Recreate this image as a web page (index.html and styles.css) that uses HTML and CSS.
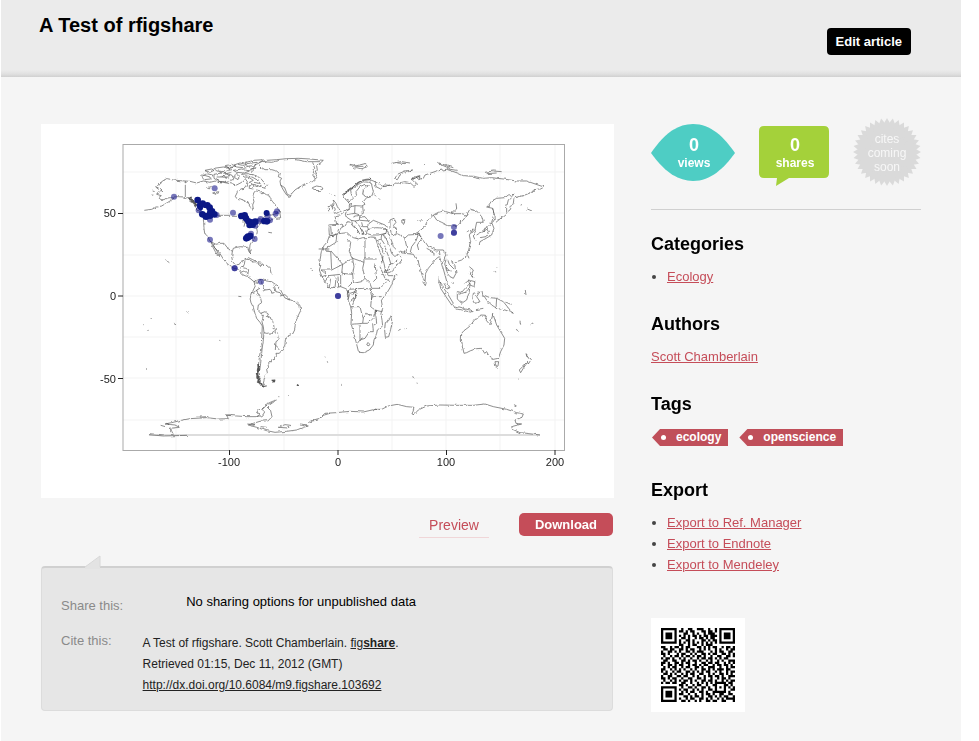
FILE: index.html
```html
<!DOCTYPE html>
<html lang="en">
<head>
<meta charset="utf-8">
<title>A Test of rfigshare</title>
<link rel="stylesheet" href="styles.css">
</head>
<body>
<div class="page">
  <header class="header">
    <h1>A Test of rfigshare</h1>
    <button class="edit" type="button">Edit article</button>
  </header>
  <main class="main">
    <div class="content">
      <figure class="figure">
        <svg viewBox="41 124 573 374" role="img" aria-label="World map of occurrences">
          <defs>
            <filter id="rough" x="-5%" y="-5%" width="110%" height="110%">
              <feTurbulence type="fractalNoise" baseFrequency="0.22" numOctaves="2" seed="4"/>
              <feDisplacementMap in="SourceGraphic" scale="3" xChannelSelector="R" yChannelSelector="G"/>
            </filter>
          </defs>
          <path class="grid" d="M176 145V450M229 145V450M284 145V450M338 145V450M392 145V450M446 145V450M500 145V450M555 145V450M123 172H564M123 213H564M123 255H564M123 296H564M123 337H564M123 378H564M123 420H564"/>
          <path class="pole" d="M149 435H540"/>
          <g filter="url(#rough)">
            <g class="coast" transform="translate(90 135) scale(.3333)">
              <path d="M163 226L185 223 198 217 215 213 232 203 245 195 252 189M252 186L262 185 280 186 290 189 300 196 310 205 318 215 325 225 333 236 340 249 341 262 342 280 344 295 352 303 360 318M252 189L240 188 228 190 222 194 213 194 206 188 214 182 200 178 204 171 218 170 210 162 200 156 206 148 214 141 224 134 232 131 250 135 270 137 286 138 300 139 320 144 340 138 360 142 380 137 400 142 420 146 440 150 455 142 465 130 472 140 468 152 462 160 452 162 442 172 436 184 440 190 452 192 465 198 476 205 482 215 486 226 490 222 488 210 492 200 488 185 492 172 500 165 512 168 520 175 530 182 535 178 540 190 548 200 558 212 568 225 560 236 545 240 530 240 520 248M568 225L572 248 560 250 552 244"/>
              <path d="M286 138V186M385 241H450"/>
              <path d="M360 318L368 327 372 336 382 346 390 356 400 372 408 382 418 392 432 400 445 403 452 412 460 420 470 424 480 430 492 440 505 442 512 432M362 320L368 335 376 350 384 362 388 366 382 350 374 338 370 328M362 320L378 328 390 325 402 325 412 338 420 342 427 350 425 365 428 380 436 390 448 388 454 378 465 376 463 388 458 398 467 400 476 404 474 415 480 425M427 350L430 340 440 337 452 335 462 336 472 333 476 345 482 355 479 342 480 330 484 322 495 312 500 300 502 290 500 280 506 272 512 265 520 262 535 258 550 252"/>
              <path d="M464 372L475 368 488 374 500 380 490 381 478 374ZM503 383L515 385 522 391 508 391ZM528 390L540 400 544 418M445 403L456 396 458 398M452 412L462 408 474 415M458 262L466 258 462 275M470 250L480 256 478 270"/>
              <path d="M508 82L530 76 560 74 590 71 625 70 660 72 700 76 690 85 680 92 682 105 675 118 680 128 668 140 650 148 630 155 615 165 606 175 600 187 590 180 580 165 572 150 570 138 575 130 565 125 568 115 560 108 545 104 525 104 512 96ZM520 80L545 82 570 76M620 74L650 80 690 80M668 82L674 100 668 120 676 132M572 150L584 158 592 178 602 182M667 158L680 153 695 156 699 162 688 167 674 166Z"/>
              <path d="M335 125L350 116 368 120 362 132 342 134ZM372 118L395 114 425 120 432 132 410 142 385 138 372 130ZM345 106L365 102 372 106 360 112ZM372 100L400 96 420 102 404 110 380 108ZM405 92L425 88 438 94 420 100ZM430 106L455 102 478 108 464 114 440 112ZM432 90L450 84 468 88 460 98 440 96ZM465 82L490 76 520 74 508 84 490 92 472 94ZM436 118L448 122 444 134 434 128ZM455 118L475 116 498 122 512 130 522 142 532 150 526 160 512 156 500 150 488 148 478 142 490 136 478 128 462 126ZM480 104L498 98 486 110ZM460 100L480 96M478 152L492 152 490 162 478 160ZM350 158L364 154 358 162ZM368 174L386 170 378 178ZM388 110L402 118 424 112M395 124L410 128 405 136M498 86L490 100 478 104M340 120L360 126M410 98L430 96M444 88L462 92M470 86L500 82M466 122L486 126 504 136M492 142L512 146M380 126L420 126M415 106L426 104"/>
              <path class="heavy" d="M292 188L304 194 312 202 320 212"/>
              <path d="M300 188L312 198 306 200 318 210 312 212 322 220M302 192L316 204M304 190L320 208 316 212 324 226M222 373L230 377 238 383M188 168L194 170M183 181L190 180M535 292L548 294M686 342H718M662 400L668 408M445 484L454 485"/>
            </g>
            <g class="coast" transform="translate(90 290) scale(.3333)">
              <path d="M492-25L496-12 490 0 484 12 480 25 483 38 490 52 495 70 500 85 510 97 517 108 516 130 514 160 510 190 506 220 502 240 500 255 502 272 510 284 522 291 530 288 520 280 524 265 526 255 532 248 530 238 536 232 534 224 540 216 552 208 560 198 558 190 568 190 578 178 585 165 586 150 594 138 608 132 614 120 616 100 622 82 632 62 630 46 618 36 602 30 585 24 578 12 572 0 565-12 555-18 545-25 530-27 518-30 508-32 498-28Z"/>
              <path d="M484 12L495 8 500 0 510-5M503 60L505 45 515 38 512 25 505 12 500 0M503 60L512 70 525 65 535 72 532 80 548 90 552 110 556 115 548 128 530 130 522 128 520 110 516 95 520 75 512 70M522 128L520 150 516 180 512 220 508 250 510 275 520 285M548 115L556 118 555 128 566 134 568 148 558 155 556 180M556 165L570 178M512-28L520-15 525 0 516 5M525 0L540-2 548 10 555 5 550-8M552-16L558 5 570 8 575 16M570 18L585 14 600 28"/>
              <path class="heavy" d="M504 222L508 240 500 250 506 262 502 272 512 278 516 288 524 290M504 235L502 265 510 280M545 272L556 271M621 284L626 288"/>
              <path d="M177 434L220 438 294 436M250 434L246 425 240 415 268 412 255 405 225 402 245 398 270 392 300 386 350 383 385 387 415 386 410 376 440 378 470 380 500 380 512 372 500 368 505 360 520 355 525 345 545 335 560 330M500 380L518 376 524 366 516 358 528 348 540 344 554 334M525 345L542 362 546 380 535 392 510 394 490 400 475 405 500 412 530 422 555 427 590 424 620 420 640 412 655 408 630 405M330 381L355 380M408 375L430 374M472 402L495 404 485 408M565 412L585 404 602 406 595 414ZM512 410L530 412M212 406L226 410M229 400L240 404M655 398L670 390 690 385 700 376 720 370"/>
              <path d="M182 84L185 87M168 234L170 236M250 100L258 104M289 62L293 66M388 151L391 152M162 104L164 104M174 121L176 121M232 8L234 9M565 320L568 320M595 316L597 318"/>
            </g>
            <g class="coast" transform="translate(310 135) scale(.3333)">
              <path d="M58 303L70 300 80 298 95 295 112 293 118 300 130 308 145 312 158 308 170 308 185 306 196 307 200 320 208 345 215 365 222 385 226 405 235 422 255 422 248 440 242 455 230 475 215 495M58 303L52 320 42 332 34 350 30 372 32 392 28 405 36 425 45 440 58 458 75 458 92 455 105 460 114 465 118 480 114 495"/>
              <path d="M42 345L62 347 65 405H33M62 347L98 388 65 405M98 388L128 370 118 350 122 322 112 310M128 370L162 382V372M165 312V372H200M162 382L158 400 165 430 155 440M98 388L95 415 128 418 130 440 115 455M128 370L132 395 128 418M155 440L130 445M165 430L180 445 185 460H210L230 440M195 385L200 430 190 440M210 395L225 430 240 440M33 405L55 422 92 418M45 440L55 425 62 430 58 458M36 425L50 420M75 458L78 430 70 422M86 456L84 425M92 455V418M118 463L160 460 180 462M128 480L140 460M46 342L78 322 80 300"/>
              <path d="M58 300L56 270 80 268 95 268 104 272 92 280 85 295 70 302ZM62 274L64 298M80 268L75 242 90 240 100 232 108 226 118 222 118 208 125 205 122 215 135 212 155 213 165 208 160 200 170 188 185 186M104 272L110 262 118 260 130 275 145 288 142 294M150 298L140 282 128 268 124 256 135 258 150 275 158 295 168 300 172 285 185 280 200 278 220 280 230 285 228 295 205 300 185 300 172 296M150 275L160 290 154 300M178 265L190 256 205 262 225 270 232 278M178 265L172 275 176 284M112 222L106 238 112 248 124 256M135 212L134 235 118 238 110 240M134 235L150 240 160 235 158 213M150 240L148 256 135 258M148 246L165 245 178 262M150 256L176 258M130 246L142 242M155 262L158 275 172 275"/>
              <path d="M228 295L215 300 213 312 222 325 228 345 236 365 242 385 228 410M222 412L240 412 262 392 278 372 270 362 262 358 255 365 245 355 238 335 232 318 222 300M205 320L222 355 215 385M230 285L245 318 250 335 265 350 285 355 310 358 318 372 325 380 330 400 338 425 345 442 347 415 355 400 370 382 380 370 388 365 392 375M218 284L228 280M200 318L212 312M238 390L262 375M222 412L226 405 240 400M338 440L346 452 349 442"/>
              <path d="M100 182L105 172 125 160 140 145 155 135 175 132 195 140 215 152 225 155 240 150M108 195L100 182M108 195L120 200 130 190 140 180 138 170 150 155 165 148 175 152 160 165 158 178 170 185 185 184 190 170 185 150 178 138M125 185L122 165 145 148 160 140 176 142M195 140L198 155 212 162 226 150 250 152 252 144 262 145 285 140 300 143 312 154 320 148 308 136 312 126 330 122 326 134 340 130 345 120 360 115 380 108 410 103 425 108 445 115 460 122 490 124 520 130 545 128 580 132 620 138 650 138 690 152 702 156 692 162 672 164 665 172 645 180 625 186 612 190 610 205 600 225 590 232 590 215 595 195 605 185 612 178 595 180 585 188 560 190 545 198 535 212 530 216 548 220 552 240 545 262 530 275 520 290 508 295 500 300"/>
              <path class="medium" d="M102 180L106 172 118 165 130 155 142 145 158 136 180 134M112 200L118 208M304 134L318 128 328 124"/>
              <path d="M308 105L285 108 262 118 254 132 262 134 270 120 290 112ZM120 88L140 92 165 86 172 94 155 102 140 98 130 100ZM126 94L160 94M245 85L275 80 300 84M262 84L288 86M382 82L410 92 430 98M390 88L420 100M525 112L550 108 575 110M530 116L560 114M415 102L440 106M70 195L78 205 82 215 92 228 80 235 72 232 76 222 68 212ZM54 212L66 210 68 222 56 228ZM72 180L76 182M62 176L64 178M192 178L198 184M206 190L210 194"/>
              <path d="M470 290L482 285 490 282 478 300 482 320 476 345 470 362 455 375 440 380 425 380 435 395 438 415 430 430 420 425 412 415 408 400 410 390M412 372L418 388 432 402M408 374L404 388 412 405 425 408M548 220L556 250 548 262M545 262L552 280 545 300 525 312 510 320 508 330M530 275L538 290 528 305 510 308M520 290L532 282M497 288L490 300 498 318M558 262L590 235M370 240L385 232 400 228 430 236 455 236 470 240 460 255 440 272 415 272 395 262 380 255ZM425 236L440 222 438 208M470 240L480 222 500 228 515 245 520 262 500 262 495 285 484 294M370 240L350 262 345 275 325 290 332 305 345 320 355 335 380 345 400 345 408 360 400 380M283 355L290 335 284 310 295 300 325 298 318 318 305 335 300 355M262 296L284 308M322 296L336 308 322 330 326 345M350 340L372 352 372 362M376 348L390 362 388 345M318 292L325 300M322 256L338 254M240 255L252 250 258 262 250 272 260 285 258 300 245 298 240 280ZM275 256L285 253 283 265 276 264Z"/>
              <path d="M392 375L398 395 405 420 412 445 420 458 412 462 402 445M388 440L400 458 415 480 430 505 425 510 408 485 392 460ZM430 512L460 520 490 528 485 532 440 522ZM442 470L455 472 470 455 480 445 478 470 470 495 455 505 442 492ZM446 478L466 472 476 462M490 475L510 470 500 485 510 500 496 505 488 490ZM478 395L490 405 484 420 492 430M482 404L478 418 490 428M475 435L495 440 492 455 480 450ZM520 480L540 488 560 490 580 500 600 525 610 535 585 525 560 520 545 510 530 495ZM560 490L558 520M516 468L520 486M498 524L520 520M585 500L602 508M474 362L477 370M425 440L428 446M388 425L386 445M462 448L474 438"/>
              <path d="M652 222L666 228M632 208L636 210M345 88L342 90M560 398L561 400M646 465L648 480M555 408L557 412M257 418L262 420"/>
            </g>
            <g class="coast" transform="translate(310 290) scale(.3333)">
              <path d="M114 30L122 50 125 70 123 100 130 125 138 155 146 187 160 188 178 180 190 165 192 150 200 130 202 120 218 108 216 90 213 70 218 55 214 30M226 98L236 92 244 76 248 92 242 118 236 140 226 142 224 120ZM116 0L114 30M122 50L150 50 155 70 160 85 158 100 123 103M150 105V150L142 160M150 150L165 145 178 125 190 125M158 100L172 100 190 85 198 60M160 85L170 70 185 80M180-5L185 20 182 50 195 60 215 65M185 20L215 20M190 125L188 100M170 162L175 158 180 164 174 168ZM120 10L135 5 138 20 122 34M140-5L136 20 128 45M178 0L190 10 184 30M196 60L200 100 192 105"/>
              <path d="M455 130L462 122 478 110 486 100 495 88 505 86 512 75 530 76 526 88 540 104 544 92 548 70 555 90 560 105 572 125 584 145 582 165 572 185 565 205 550 208 538 200 530 185 524 190 515 175 500 176 482 182 470 188 462 190 458 172 454 150ZM555 215L566 215 564 228 558 232ZM648 190L655 200 664 208 655 222 650 212M650 220L640 235 632 248 628 240 640 228ZM648 192L656 206M630 92L632 104M618 118L630 126M662 104L670 98M625 267L627 268M307 260L313 263M320 279L323 280M264 121L272 118M284 116L290 115M45 200L46 202M52 214L53 218M94 286L96 287"/>
              <path d="M0 394L25 390 45 370 80 368 120 364 160 366 195 358 215 358 235 348 262 343 290 350 312 352 306 372 312 374 325 360 350 348 390 345 440 346 490 346 525 342 550 350 590 358 620 368 640 372 636 382 615 390 618 400 635 402 605 410 608 418 630 428 690 435M612 344L620 348M190 356L210 362"/>
            </g>
          </g>
          <rect class="panel" x="123" y="144.500" width="441.500" height="306"/>
          <path class="ticks" d="M118 213.500H123M118 296H123M118 378.500H123M229.500 450V455M338 450V455M446.500 450V455M555 450V455"/>
          <g class="labels">
            <g text-anchor="end"><text x="116" y="217">50</text><text x="116" y="300">0</text><text x="116" y="383">-50</text></g>
            <g text-anchor="middle"><text x="229" y="466">-100</text><text x="338" y="466">0</text><text x="446" y="466">100</text><text x="555" y="466">200</text></g>
          </g>
          <g class="light" transform="translate(90 135) scale(.3333)">
            <circle cx="252" cy="185" r="9"/><circle cx="374" cy="160" r="9"/><circle cx="429" cy="233" r="9"/><circle cx="360" cy="254" r="9"/><circle cx="360" cy="314" r="9"/><circle cx="513" cy="440" r="9"/><circle cx="434" cy="400" r="9"/><circle cx="434" cy="400" r="9"/><circle cx="561" cy="229" r="9"/><circle cx="557" cy="236" r="9"/><circle cx="494" cy="312" r="9"/><circle cx="533" cy="242" r="9"/><circle cx="483" cy="296" r="9"/><circle cx="512" cy="252" r="9"/><circle cx="507" cy="258" r="9"/><circle cx="496" cy="272" r="9"/><circle cx="380" cy="240" r="9"/><circle cx="326" cy="226" r="9"/><circle cx="540" cy="256" r="9"/>
            <circle cx="1052" cy="303" r="9"/><circle cx="1092" cy="276" r="9"/><circle cx="1092" cy="293" r="9"/><circle cx="1092" cy="293" r="9"/><circle cx="744" cy="483" r="9"/><circle cx="744" cy="483" r="9"/>
          </g>
          <g class="dark" transform="translate(90 135) scale(.3333)">
            <circle cx="323" cy="195" r="10"/><circle cx="330" cy="212" r="10"/><circle cx="338" cy="206" r="10"/><circle cx="352" cy="211" r="10"/><circle cx="359" cy="218" r="10"/><circle cx="366" cy="229" r="10"/><circle cx="373" cy="238" r="10"/><circle cx="360" cy="241" r="11"/><circle cx="348" cy="244" r="11"/><circle cx="337" cy="238" r="10"/><circle cx="344" cy="211" r="8"/><circle cx="360" cy="232" r="9"/><circle cx="332" cy="220" r="7"/>
            <circle cx="454" cy="243" r="10"/><circle cx="464" cy="241" r="10"/><circle cx="468" cy="250" r="10"/><circle cx="475" cy="259" r="10"/><circle cx="479" cy="270" r="10"/><circle cx="488" cy="269" r="10"/><circle cx="496" cy="260" r="10"/><circle cx="484" cy="261" r="9"/><circle cx="530" cy="234" r="9"/><circle cx="523" cy="258" r="10"/><circle cx="531" cy="259" r="10"/><circle cx="469" cy="310" r="10"/><circle cx="474" cy="306" r="11"/><circle cx="481" cy="303" r="10"/>
          </g>
        </svg>
      </figure>
      <div class="actions">
        <a class="preview" href="#preview">Preview</a>
        <button class="download" type="button">Download</button>
      </div>
      <section class="share">
        <svg class="tail" viewBox="0 0 16 14" aria-hidden="true"><path class="tail-fill" d="M0 12L15 1V14H0Z"/><path class="tail-line" d="M0 12L15 1V12"/></svg>
        <div class="row share-row"><span class="label">Share this:</span><p class="note">No sharing options for unpublished data</p></div>
        <div class="row cite-row"><span class="label">Cite this:</span>
          <p class="cite">A Test of rfigshare. Scott Chamberlain. <a href="#figshare">fig<b>share</b></a>.<br>Retrieved 01:15, Dec 11, 2012 (GMT)<br><a href="#doi">http://dx.doi.org/10.6084/m9.figshare.103692</a></p></div>
      </section>
    </div>
    <aside class="side">
      <div class="stats">
        <div class="stat views">
          <svg viewBox="0 0 84 57" aria-hidden="true"><path d="M0 29C11 13 24 0 42 0S73 13 84 29C73 44 60 57 42 57S11 44 0 29Z"/></svg>
          <p><strong>0</strong>views</p>
        </div>
        <div class="stat shares">
          <svg viewBox="0 0 70 61" aria-hidden="true"><path d="M5 0H65Q70 0 70 5V47Q70 52 65 52H30L17 60 18 52H5Q0 52 0 47V5Q0 0 5 0Z"/></svg>
          <p><strong>0</strong>shares</p>
        </div>
        <div class="stat cites">
          <svg viewBox="-34 -34 68 68" aria-hidden="true"><defs><path id="tri" d="M0-34L29.440 17H-29.440Z"/></defs><use href="#tri"/><use href="#tri" transform="rotate(10)"/><use href="#tri" transform="rotate(20)"/><use href="#tri" transform="rotate(30)"/><use href="#tri" transform="rotate(40)"/><use href="#tri" transform="rotate(50)"/><use href="#tri" transform="rotate(60)"/><use href="#tri" transform="rotate(70)"/><use href="#tri" transform="rotate(80)"/><use href="#tri" transform="rotate(90)"/><use href="#tri" transform="rotate(100)"/><use href="#tri" transform="rotate(110)"/></svg>
          <p>cites<br>coming<br>soon</p>
        </div>
      </div>
      <section class="block"><h2>Categories</h2><ul><li><a href="#ecology">Ecology</a></li></ul></section>
      <section class="block"><h2>Authors</h2><p><a href="#author">Scott Chamberlain</a></p></section>
      <section class="block"><h2>Tags</h2><div class="tags"><a class="tag" href="#tag-ecology">ecology</a><a class="tag" href="#tag-openscience">openscience</a></div></section>
      <section class="block"><h2>Export</h2><ul><li><a href="#ref">Export to Ref. Manager</a></li><li><a href="#endnote">Export to Endnote</a></li><li><a href="#mendeley">Export to Mendeley</a></li></ul></section>
      <div class="qr"><svg id="qr" viewBox="0 0 33 33" role="img" aria-label="QR code"></svg></div>
    </aside>
  </main>
</div>
<script src="qr.js"></script>
</body>
</html>
```
FILE: qr.js
```js
// Each string is one row of modules; "#" is a dark module.
const rows = [
  "#######..#..##..###..#..#.#######",
  "#.....#.##.#.##...##.##.#.#.....#",
  "#.###.#...##..#.#..#.###..#.###.#",
  "#.###.#.#.#.#.##.#.##.###.#.###.#",
  "#.###.#..##.#..#.##.#.##..#.###.#",
  "#.....#.#..##.#...##.#.##.#.....#",
  "#######.#.#.#.#.#.#.#.#.#.#######",
  "........##..#.##..#.###..........",
  "##..#.##.#.##...##.#.#.##..#.##.#",
  ".##.##..##.#.##..#.#.#..#.#..#.##",
  "#..##.#.#..##.#.###...#.#.##..##.",
  "##.#...#.##..#.#..##.#.##..##.#.#",
  ".#..#.##.#.##.#.##.#..#..##..##.#",
  "#.##.#..#.#..#..#.##.##.#.#.##...",
  ".##..##..##.#.##.#..#.#..#.#..###",
  "##.#..##.#.##..#..##.##.##..#.#.#",
  "#..##.#.##..#.##.#.##..#.##.##.#.",
  ".#.#.##..#.##..##.#..###..#..#.##",
  "##..#.#.#.#..#.#..##.#.#.###.##..",
  "#.#..#.##..##.#.#.#.##..#.#..#.##",
  ".##.#.#..#.#.##..##..#.#..##.#.#.",
  "#..##..##.##..#.#..#.##.##.#..###",
  "##.#.##..#..##..##.#..#..#.##.#..",
  ".#..#.#.#.##.#.#..##.##.#..#.#.##",
  "#.##.##..##..#..#.#.#.#.#####.##.",
  "........##.#..#.##..#..##...##.#.",
  "#######..#..##.#..##.#..#.#.#.#.#",
  "#.....#.#.##..#.#.#..##.#...#..##",
  "#.###.#..#.#.##..##.#..######.#..",
  "#.###.#.##..#..#..#.##.#..##..##.",
  "#.###.#...##.#.##.#..##.#.#.##..#",
  "#.....#.#..#.##..##.#.#..#.#.####",
  "#######..##.#..#.#..##.##..##...#",
];
let d = "";
rows.forEach((row, y) => {
  for (const run of row.matchAll(/#+/g)) d += `M${run.index} ${y}h${run[0].length}v1h-${run[0].length}z`;
});
const path = document.createElementNS("http://www.w3.org/2000/svg", "path");
path.setAttribute("d", d);
document.getElementById("qr").append(path);
```
FILE: styles.css
```css
* { box-sizing: border-box; }
body { margin: 0; background: #fff; color: #000; font: 13px/21px "Liberation Sans", Arial, sans-serif; }
h1, h2, p, ul, figure { margin: 0; padding: 0; }
svg { display: block; }
a { color: #c54d59; }
button { border: 0; padding: 0; color: #fff; font: bold 13px/21px "Liberation Sans", Arial, sans-serif; }
.page { min-height: 100vh; margin: 0 18px 0 1px; background: #f5f5f5; }

.header { display: flex; justify-content: space-between; align-items: flex-start; padding: 13px 50px 22px 38px; background: linear-gradient(to top, #d0d0d0, #e0e0e0 3px, #ebebeb 7px); }
h1 { font-size: 20px; line-height: 24px; }
.edit { margin-top: 15px; padding: 3px 9px; border-radius: 4px; background: #000; }

.main { display: grid; grid-template-columns: minmax(0, 1fr) 270px; gap: 37px; padding: 47px 40px 28px; }
.figure { background: #fff; }
.figure svg { width: 100%; height: auto; }
.grid { fill: none; stroke: #f3f3f3; }
.pole { stroke: #ddd; stroke-width: 2; }
.coast { fill: none; stroke: #555; stroke-width: 2; stroke-linejoin: round; }
.medium { stroke-width: 3; }
.heavy { stroke-width: 5; }
.panel { fill: none; stroke: #aaa; }
.ticks { stroke: #222; }
.labels { font-size: 11px; fill: #222; }
.light { fill: #1a1a8c; fill-opacity: .6; }
.dark { fill: #0c1886; }

.actions { display: flex; justify-content: flex-end; align-items: flex-start; gap: 30px; padding: 15px 1px 0 0; }
.preview { padding: 2px 10px 1px; border-bottom: 1px solid #f0d6d8; font-size: 14px; text-decoration: none; }
.download { padding: 1px 16px; border-radius: 5px; background: #c54d59; }

.share { position: relative; margin: 28px 1px 0 0; padding: 23px 19px 14px; border: 1px solid #dcdcdc; border-top: 2px solid #d0d0d0; border-radius: 4px; background: #e6e6e6; }
.tail { position: absolute; left: 43px; top: -13px; width: 16px; height: 14px; }
.tail-fill { fill: #e3e3e3; }
.tail-line { fill: none; stroke: #d8d8d8; }
.row { display: flex; align-items: flex-start; }
.label { color: #8a8a8a; }
.share-row { gap: 63px; }
.share-row .label { padding-top: 4px; }
.cite-row { gap: 31px; padding-top: 14px; }
.cite { padding-top: 3px; color: #222; font-size: 12px; }
.cite a { color: #222; }

.stats { display: flex; justify-content: space-between; padding-bottom: 22px; border-bottom: 1px solid #d0d0d0; margin: -6px 0 22px; }
.stat { display: grid; color: #fff; font-weight: bold; font-size: 12px; line-height: 18px; text-align: center; }
.stat > * { grid-area: 1 / 1; }
.stat strong { display: block; font-size: 18px; }
.views svg { width: 84px; margin-top: 6px; fill: #4ecdc4; }
.shares svg { width: 70px; margin-top: 8px; fill: #a4d13a; }
.views p, .shares p { padding: 18px 0 0 2px; }
.cites svg { width: 68px; fill: #dadada; }
.cites p { padding-top: 14px; color: #f7f7f7; font-weight: normal; line-height: 14px; }

.block { margin-bottom: 25px; }
h2 { margin-bottom: 10px; font-size: 18px; line-height: 24px; }
ul { padding-left: 16px; }
li::marker { color: #444; }
.tags { display: flex; gap: 11px; padding: 3px 0 7px 1px; }
.tag { position: relative; padding: 0 7px 0 24px; background: #c04f5a; color: #fff; font-weight: bold; font-size: 12px; line-height: 17px; text-decoration: none; clip-path: polygon(0 50%, 8px 0, 100% 0, 100% 100%, 8px 100%); }
.tag::before { content: ""; position: absolute; left: 9px; top: 6px; width: 5px; height: 5px; border-radius: 50%; background: #fff; }
.qr { width: 94px; margin-top: 43px; padding: 10px; background: #fff; }
```
